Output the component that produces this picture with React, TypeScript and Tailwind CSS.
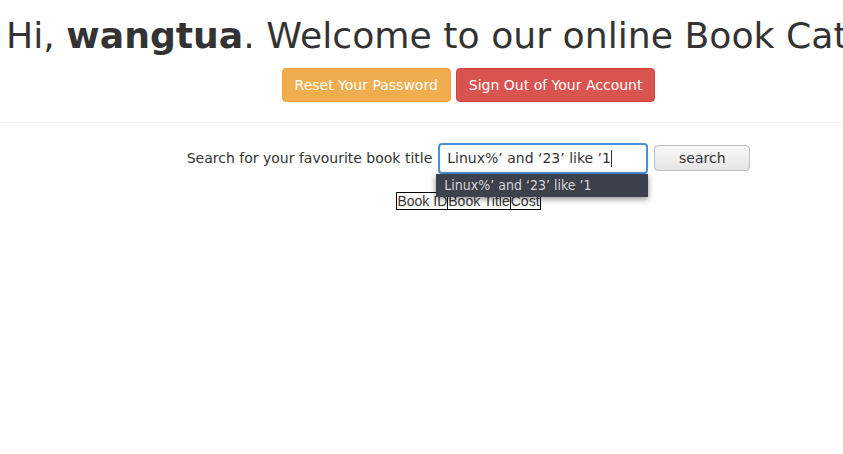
import React from "react";

const dejavu = { fontFamily: '"DejaVu Sans", sans-serif' };

const App: React.FC = () => {
  return (
    <div className="w-full h-[454px] overflow-hidden bg-white text-[#333]" style={dejavu}>
      <div className="w-[937px]">
        {/* Greeting */}
        <h1 className="mt-4 mb-3 px-[6px] text-[36.2px] leading-[39.6px] font-normal whitespace-nowrap">
          Hi, <b>wangtua</b>. Welcome to our online Book Catalogue
        </h1>

        <div className="flex justify-center gap-[5px]">
          <button className="px-3 py-[6px] text-[14px] leading-[20px] text-white bg-[#f0ad4e] border border-[#eea236] rounded-[4px]">
            Reset Your Password
          </button>
          <button className="px-3 py-[6px] text-[14px] leading-[20px] text-white bg-[#d9534f] border border-[#d43f3a] rounded-[4px]">
            Sign Out of Your Account
          </button>
        </div>

        <hr className="mt-5 mb-5 border-0 border-t border-[#eee]" />

        {/* Search form */}
        <div className="flex justify-center items-center text-[14px]">
          <label className="mr-[6px]">Search for your favourite book title</label>
          <div className="relative">
            <div className="w-[210px] h-[31px] border-2 border-[#4a90d9] rounded-[4px] flex items-center pl-[7px] bg-white">
              <span>Linux%’ and ‘23’ like ’1</span>
              <span className="w-px h-[17px] bg-[#333]" />
            </div>
            {/* autofill popup */}
            <div className="absolute left-[-2px] top-[31px] w-[212px] h-[23px] bg-[#3d414b] text-[#d3d5d9] flex items-center pl-[8px] shadow-[0_2px_6px_rgba(0,0,0,0.45)] z-10">
              <span style={{ fontFamily: '"DejaVu Sans Condensed", "DejaVu Sans", sans-serif' }}>
                Linux%’ and ‘23’ like ’1
              </span>
            </div>
          </div>
          <button className="ml-[6px] w-[96px] h-[26px] border border-[#bdbdbd] rounded-[4px] bg-gradient-to-b from-[#f7f7f7] to-[#e6e6e6] text-[#333]">
            search
          </button>
        </div>

        {/* Results */}
        <div className="flex justify-center mt-[18px]">
          <table
            className="border-collapse text-[14px] leading-[16px] text-[#333]"
            style={{ fontFamily: '"Liberation Sans", Arial, sans-serif' }}
          >
            <tbody>
              <tr>
                <td className="border border-black p-0">Book ID</td>
                <td className="border border-black p-0">Book Title</td>
                <td className="border border-black p-0">Cost</td>
              </tr>
            </tbody>
          </table>
        </div>
      </div>
    </div>
  );
};

export default App;
